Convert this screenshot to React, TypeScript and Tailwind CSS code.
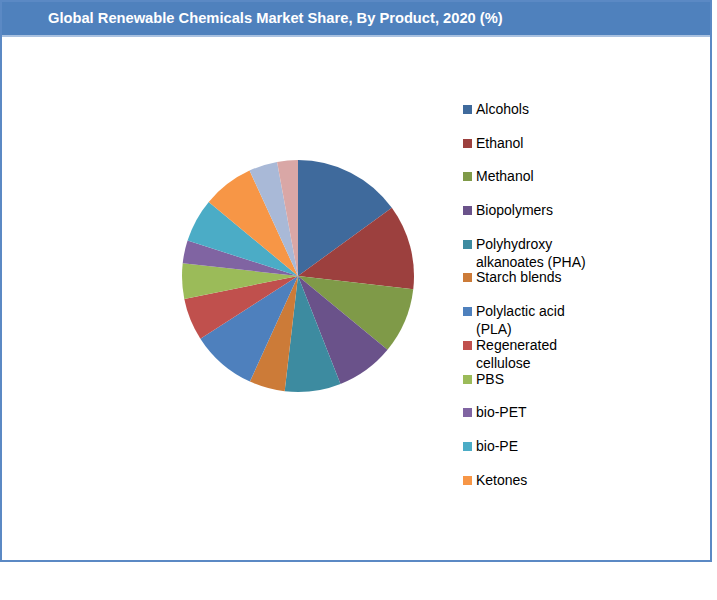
import React from "react";

const slices: [number, string][] = [
  [54, "#3f6a9c"], [96.6, "#9c403e"], [129.5, "#7f9a48"], [158.5, "#6a528a"],
  [186.6, "#3d8ba0"], [204.5, "#cc7b38"], [237.3, "#4e80bd"], [258.6, "#c0504d"],
  [276.3, "#9bbb59"], [287.8, "#8064a2"], [309.7, "#4bacc6"], [335.3, "#f79646"],
  [349.6, "#a9b9d7"], [360, "#d9a7a6"],
];

const legend: [string, string][] = [
  ["Alcohols", "#3f6a9c"], ["Ethanol", "#9c403e"], ["Methanol", "#7f9a48"],
  ["Biopolymers", "#6a528a"], ["Polyhydroxy alkanoates (PHA)", "#3d8ba0"],
  ["Starch blends", "#cc7b38"], ["Polylactic acid (PLA)", "#4e80bd"],
  ["Regenerated cellulose", "#c0504d"], ["PBS", "#9bbb59"], ["bio-PET", "#8064a2"],
  ["bio-PE", "#4bacc6"], ["Ketones", "#f79646"],
];

function pt(a: number, r: number, c: number) {
  const rad = (a * Math.PI) / 180;
  return [c + r * Math.sin(rad), c - r * Math.cos(rad)];
}

export default function App() {
  const c = 117, r = 116;
  let prev = 0;
  return (
    <div className="w-[717px] h-[600px] bg-white" style={{ fontFamily: '"Liberation Sans", Arial, sans-serif' }}>
      <div className="w-[712px] h-[562px] border-2 border-[#5b89c4] flex flex-col">
        <div className="h-[33px] bg-[#4f81bd] flex items-center pl-[46px] text-white font-bold text-[14.7px] shrink-0">
          Global Renewable Chemicals Market Share, By Product, 2020 (%)
        </div>
        <div className="h-[2px] bg-[#a9c1e0] shrink-0" />
        <div className="flex items-start">
          <svg width={234} height={234} className="ml-[179px] mt-[122px] shrink-0">
            {slices.map(([end, col], i) => {
              const [x1, y1] = pt(prev, r, c);
              const [x2, y2] = pt(end, r, c);
              const large = end - prev > 180 ? 1 : 0;
              const d = `M${c},${c} L${x1},${y1} A${r},${r} 0 ${large} 1 ${x2},${y2} Z`;
              prev = end;
              return <path key={i} d={d} fill={col} />;
            })}
          </svg>
          <div className="ml-[48px] mt-[63px] w-[140px] flex flex-col">
            {legend.map(([t, col]) => (
              <div key={t} className="h-[33.7px] flex items-start text-[14px] leading-[18px] text-black">
                <span className="w-[9px] h-[9px] mt-[5px] mr-[4px] shrink-0" style={{ background: col }} />
                <span className="whitespace-normal">{t}</span>
              </div>
            ))}
          </div>
        </div>
      </div>
    </div>
  );
}
